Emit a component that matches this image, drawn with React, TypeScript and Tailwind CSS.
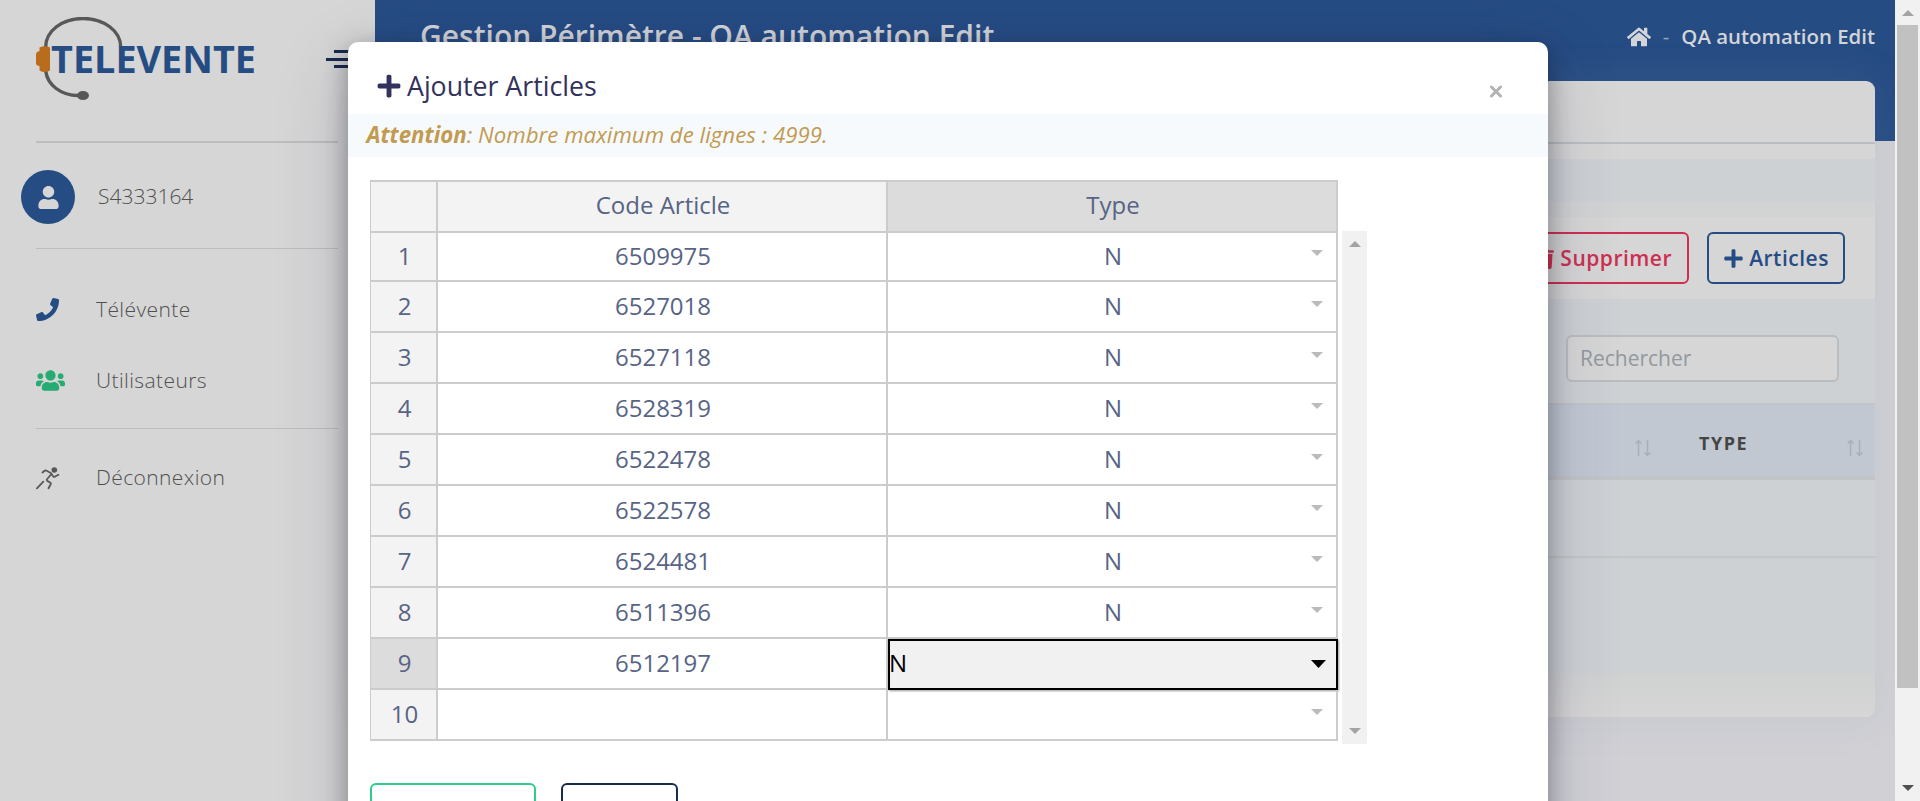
import { FaHome, FaPhone, FaPlus, FaTrash, FaUser, FaUsers } from "react-icons/fa";

const rows = ["6509975", "6527018", "6527118", "6528319", "6522478", "6522578", "6524481", "6511396", "6512197", ""];

function Logo() {
  return (
    <svg width="230" height="90" viewBox="0 0 230 90" className="block">
      <path d="M9.700 30C9.700 14 26 1.500 47 1.500S84.700 14 84.700 30" fill="none" stroke="#575859" strokeWidth="3.400" />
      <path d="M9.700 54C11.500 68 25 78.500 42 78.500" fill="none" stroke="#575859" strokeWidth="3.400" />
      <ellipse cx="47" cy="78.500" rx="6" ry="4.500" fill="#575859" />
      <path d="M3.500 34V30.500Q8.500 27.800 14 30.500V53.500Q8.500 56.500 3.500 53.500V49Q0 49 0 46V37.500Q0 34.500 3.500 34z" fill="#b96d1c" />
      <text x="15" y="55.500" textLength="205" lengthAdjust="spacingAndGlyphs" fill="#264c84" fontFamily="Open Sans" fontWeight="700" fontSize="37">TELEVENTE</text>
    </svg>
  );
}

function Runner() {
  return (
    <svg width="24" height="23" viewBox="0 0 24 23" fill="none" stroke="#575757" strokeWidth="1.800" strokeLinecap="round" strokeLinejoin="round">
      <circle cx="18.300" cy="3" r="2.800" fill="#575757" stroke="none" />
      <path d="M6.500 5.500l2-1.700q1-.6 2.200 0l4 2.200q1 .6.300 1.500l-3.800 4.500q-1 1.300.4 2.100l2.500 1.400q1 .6.600 1.700l-2.200 4M15 6.300l2.200 3q.7.800 1.600.4l3.500-1.900M.9 21.300l6.400-6.600" />
    </svg>
  );
}

function Sort() {
  return (
    <svg width="17" height="18" viewBox="0 0 17 18" fill="none" stroke="#a9afb8" strokeWidth="1.500">
      <path d="M3.500 17V2M.7 4.500L3.500 1.500L6.300 4.500M12.500 1V16M9.700 13.500L12.500 16.500L15.300 13.500" />
    </svg>
  );
}

function Sidebar() {
  return (
    <aside className="flex h-full w-[375px] shrink-0 flex-col bg-[#d6d6d6] pl-9 pr-[37px] text-[21px] font-light text-[#505050]">
      <div className="flex h-[141px] items-start justify-between pt-[17px]">
        <Logo />
        <div className="-mr-2 mt-[33px] flex w-[42px] shrink-0 flex-col gap-[4.500px] pl-[22px]">
          <i className="ml-2 h-[3px] w-5 bg-[#172b4d]" />
          <i className="h-[3px] w-7 bg-[#172b4d]" />
          <i className="ml-2 h-[3px] w-5 bg-[#172b4d]" />
        </div>
      </div>
      <hr className="h-0.5 border-0 bg-[#bdbdbd]" />
      <div className="-ml-[15px] flex h-[105px] items-center pt-[3px]">
        <span className="flex size-[54px] items-center justify-center rounded-full bg-[#264c84] text-[#d6d6d6]">
          <FaUser size={23} />
        </span>
        <span className="ml-[23px]">S4333164</span>
      </div>
      <hr className="h-px border-0 bg-[#bdbdbd]" />
      <nav className="flex h-[179px] flex-col pt-[25px] tracking-[0.400px]">
        <a className="flex h-[71px] items-center"><span className="w-[60px] text-[#264c84]"><FaPhone size={23} /></span>Télévente</a>
        <a className="flex h-[71px] items-center"><span className="w-[60px] text-[#26ab72]"><FaUsers size={29} /></span>Utilisateurs</a>
      </nav>
      <hr className="h-px border-0 bg-[#bdbdbd]" />
      <a className="mt-[13px] flex h-[71px] items-center tracking-[0.400px]"><span className="w-[60px] pt-0.5"><Runner /></span>Déconnexion</a>
    </aside>
  );
}

function Content() {
  return (
    <main className="h-full w-[1520px] bg-[linear-gradient(#264c84_141px,#d0d0d5_141px)] pr-5">
      <header className="flex h-[81px] items-start justify-between pl-[45px] pt-[15px] font-semibold text-[#d3d5d9]">
        <h1 className="text-[30px] leading-[42px]">Gestion Périmètre - QA automation Edit</h1>
        <div className="flex h-[43px] items-center text-[20.400px]">
          <FaHome size={24} />
          <span className="mx-3 font-normal text-[#9ba6b8]">-</span>
          QA automation Edit
        </div>
      </header>
      <section className="flex h-[636px] flex-col rounded-[9px] bg-[#d6d6d6] shadow-[0_0_40px_rgba(136,152,170,0.150)]">
        <div className="h-[61px]" />
        <div className="h-0.5 bg-[#babec3]" />
        <div className="h-[15px]" />
        <div className="h-[43px] bg-[#cdd1d4]" />
        <div className="h-[15px] bg-[#d2d3d3]" />
        <div className="flex h-[82px] items-center justify-end gap-[18px] pr-[30px] text-[21px] font-semibold tracking-[0.500px]">
          <button className="flex h-[52px] w-[184px] items-center justify-end gap-[5px] rounded-md border-2 border-[#cd2f50] pr-[15px] pt-px text-[#cd2f50]">
            <FaTrash size={20} />Supprimer
          </button>
          <button className="flex h-[52px] w-[138px] items-center justify-center gap-[5px] rounded-md border-2 border-[#264c84] pt-px text-[#264c84]">
            <FaPlus size={21} />Articles
          </button>
        </div>
        <div className="flex h-[104px] items-start justify-end bg-[#cdd1d4] pr-9 pt-9">
          <div className="flex h-[47px] w-[273px] items-center rounded-md border-2 border-[#b9bdc0] bg-[#d6d6d6] pl-3 text-[21px] text-[#91999f]">Rechercher</div>
        </div>
        <div className="flex h-[77px] items-center justify-end border-b-4 border-t-2 border-[#c3c4c8] bg-[#c1c8d2] pr-[11px]">
          <span className="mt-[15px]"><Sort /></span>
          <b className="ml-[47px] mt-1.5 w-[148px] text-[18px] font-bold tracking-[1.500px] text-[#444]">TYPE</b>
          <span className="mt-[15px]"><Sort /></span>
        </div>
        <div className="h-[78px] border-b-2 border-[#c3c5c8] bg-[#cdd1d4]" />
        <div className="h-[115px] bg-[#cdd1d4]" />
        <div className="h-[44px] rounded-b-[9px] bg-linear-to-b from-[#d0d1d1] to-[#d6d6d6]" />
      </section>
    </main>
  );
}

function PageScrollbar() {
  return (
    <div className="flex h-full w-[25px] flex-col items-center bg-[#f1f1f1]">
      <div className="flex h-[25px] items-center"><svg width="12" height="6"><path d="M0 6L6 0L12 6z" fill="#a3a3a3" /></svg></div>
      <div className="h-[663px] w-[21px] bg-[#c1c1c1]" />
      <div className="mt-auto pb-[10px]"><svg className="block" width="12" height="6"><path d="M0 0L6 6L12 0z" fill="#505050" /></svg></div>
    </div>
  );
}

function Grid() {
  return (
    <div className="flex items-start pl-[22px] text-[24px] text-[#576485]">
      <div className="w-[968px] border-l border-t-2 border-[#ccc]">
        <div className="flex h-[51px] text-center leading-[45px]">
          <div className="w-[67px] border-b-2 border-r-2 border-[#ccc] bg-[#f3f3f3]" />
          <div className="w-[450px] border-b-2 border-r-2 border-[#ccc] bg-[#f3f3f3] pl-0.5">Code Article</div>
          <div className="w-[450px] border-b-2 border-r-2 border-[#ccc] bg-[#dcdcdc] pl-0.5">Type</div>
        </div>
        {rows.map((code, i) => {
          const active = i === 8;
          return (
            <div key={i} className={`flex text-center ${i === 0 ? "h-[49px] leading-[45px]" : "h-[51px] leading-[48px]"}`}>
              <div className={`w-[67px] border-b-2 border-r-2 border-[#ccc] pl-0.5 ${active ? "bg-[#dcdcdc]" : "bg-[#f3f3f3]"}`}>{i + 1}</div>
              <div className="w-[450px] border-b-2 border-r-2 border-[#ccc] pl-0.5">{code}</div>
              {active ? (
                <div className="flex h-[51px] w-[450px] items-start justify-between border-2 border-black bg-[#f1f1f1] pr-[10px] leading-[44px] text-black shadow-[1px_1px_2px_rgba(0,0,0,0.400)]">
                  <span className="-ml-px">N</span>
                  <svg className="mt-[19px]" width="15" height="8"><path d="M0 0H15L7.500 8z" fill="#000" /></svg>
                </div>
              ) : (
                <div className="flex w-[450px] items-start border-b-2 border-r-2 border-[#ccc] pr-[13px]">
                  <span className="w-[423px] shrink-0 pl-[27px]">{code && "N"}</span>
                  <svg className={`shrink-0 ${i === 0 ? "mt-[17px]" : "mt-[19px]"}`} width="12" height="6"><path d="M0 0H12L6 6z" fill="#bbb" /></svg>
                </div>
              )}
            </div>
          );
        })}
      </div>
      <div className="ml-1 mt-[51px] flex h-[513px] w-[25px] flex-col items-center justify-between bg-[#f1f1f1] py-[10px]">
        <svg width="12" height="6"><path d="M0 6L6 0L12 6z" fill="#a3a3a3" /></svg>
        <svg width="12" height="6"><path d="M0 0L6 6L12 0z" fill="#a3a3a3" /></svg>
      </div>
    </div>
  );
}

function Modal() {
  return (
    <div className="absolute left-[348px] top-[42px] h-[900px] w-[1200px] rounded-[10px] bg-white shadow-[0_22px_75px_rgba(50,50,93,0.200),0_7px_26px_rgba(0,0,0,0.350)]">
      <div className="flex h-[72px] items-center pl-[28px] pr-[46px] pt-4 text-[#32325d]">
        <FaPlus size={26} />
        <h2 className="ml-[5px] text-[26.700px] font-medium">Ajouter Articles</h2>
        <svg className="ml-auto mt-2.5" width="12" height="13" viewBox="0 0 12 13"><path d="M1.500 2L10.500 11M10.500 2L1.500 11" stroke="#b2b2b2" strokeWidth="3" strokeLinecap="round" /></svg>
      </div>
      <p className="h-[43px] bg-[#f6fafd] pl-[18.500px] text-[22.250px] italic leading-[42px] text-[#c29a50]"><b>Attention</b>: Nombre maximum de lignes : 4999.</p>
      <div className="h-[23px]" />
      <Grid />
      <div className="mt-[39px] flex gap-[25px] pl-[22px] text-[21px] font-semibold tracking-[0.500px]">
        <button className="h-[52px] w-[166px] rounded-md border-2 border-[#2dce89] pt-0.5 text-[#2dce89]">Sauvegarder</button>
        <button className="h-[52px] w-[117px] rounded-md border-2 border-[#172b4d] pt-0.5 text-[#172b4d]">Annuler</button>
      </div>
    </div>
  );
}

export default function App() {
  return (
    <div className="relative flex h-[801px] w-[1920px] overflow-hidden font-['Open_Sans',sans-serif]">
      <Sidebar />
      <Content />
      <Modal />
      <PageScrollbar />
    </div>
  );
}
